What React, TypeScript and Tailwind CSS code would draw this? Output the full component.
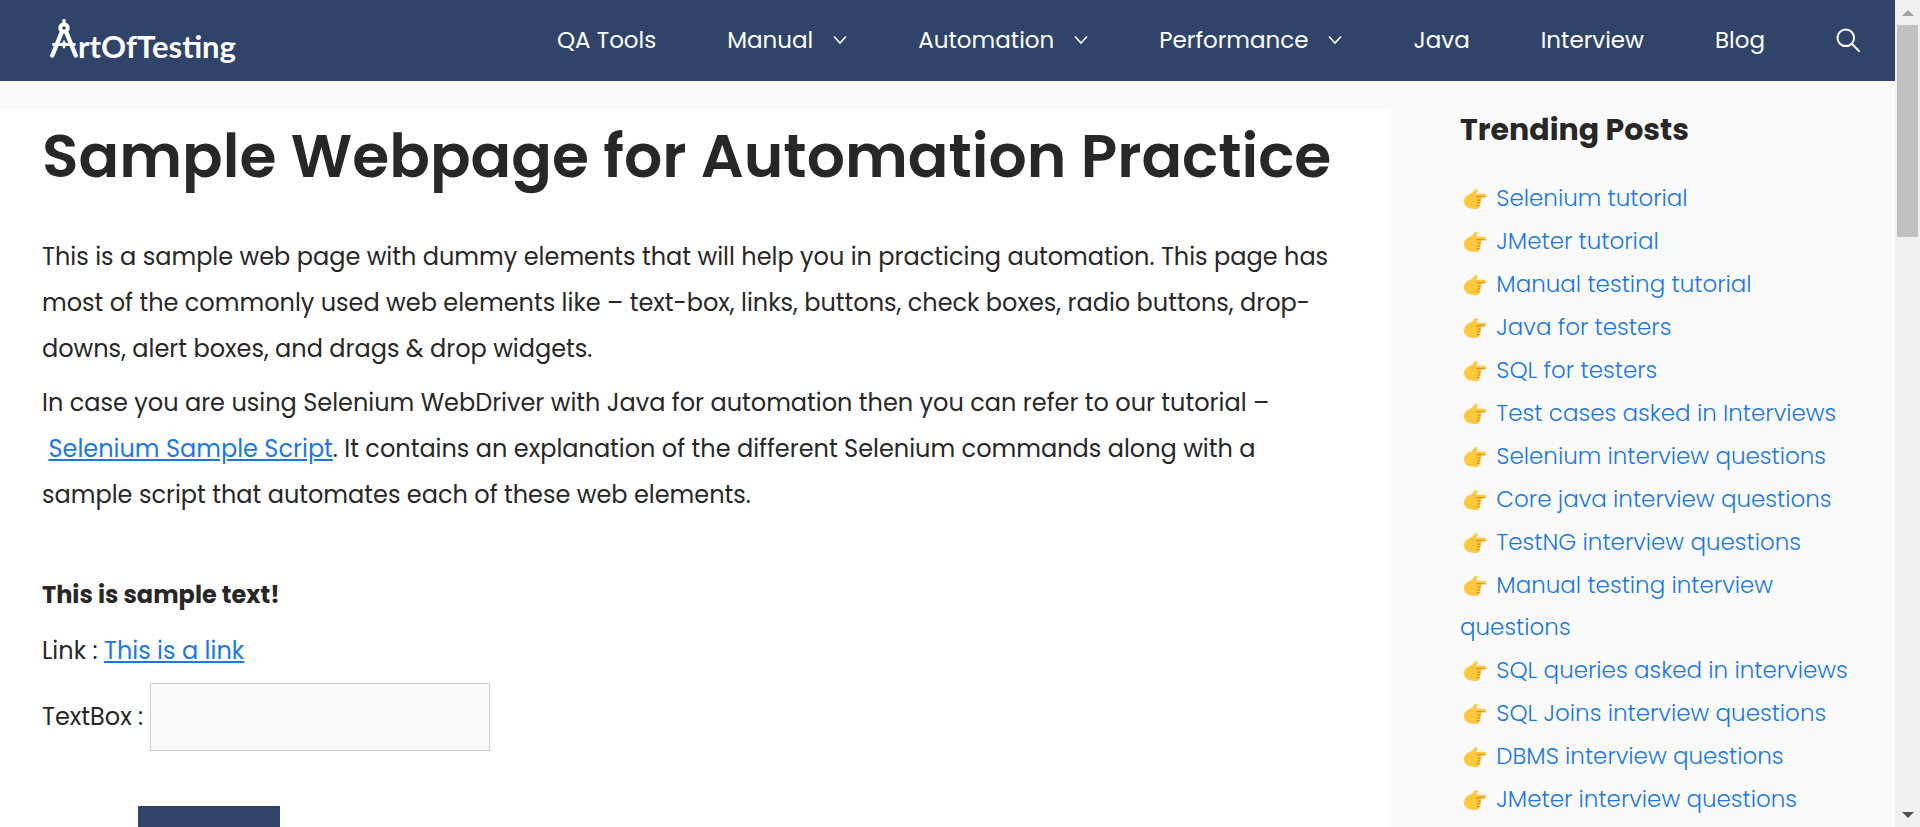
import React from "react";

type NavItem = { label: string; menu?: boolean };

const navItems: NavItem[] = [
  { label: "QA Tools" },
  { label: "Manual", menu: true },
  { label: "Automation", menu: true },
  { label: "Performance", menu: true },
  { label: "Java" },
  { label: "Interview" },
  { label: "Blog" },
];

const posts = [
  "Selenium tutorial",
  "JMeter tutorial",
  "Manual testing tutorial",
  "Java for testers",
  "SQL for testers",
  "Test cases asked in Interviews",
  "Selenium interview questions",
  "Core java interview questions",
  "TestNG interview questions",
  "Manual testing interview questions",
  "SQL queries asked in interviews",
  "SQL Joins interview questions",
  "DBMS interview questions",
  "JMeter interview questions",
];

function Logo() {
  return (
    <a href="#home" aria-label="ArtOfTesting" className="mt-1 flex items-baseline text-white">
      <svg viewBox="0 0 28 39" className="h-[39px] w-7" fill="none" stroke="currentColor" aria-hidden="true">
        <path d="M14 1.500v4" strokeWidth="3.200" strokeLinecap="round" />
        <circle cx="14" cy="9" r="3.700" strokeWidth="4" />
        <path d="M12 12.500 2.300 36.500M16 12.500l9.700 24" strokeWidth="4.400" strokeLinecap="round" />
        <path d="M3.500 25.500h21M14 23v5" strokeWidth="2.800" strokeLinecap="round" />
      </svg>
      <span className="font-[Lato,sans-serif] text-[31px] leading-[38px] font-bold">rtOfTesting</span>
    </a>
  );
}

function Chevron() {
  return (
    <svg viewBox="0 0 14 10" className="h-[10px] w-[14px]" fill="none" stroke="currentColor" strokeWidth="1.600" aria-hidden="true">
      <path d="M1 1.500 7 8l6-6.500" />
    </svg>
  );
}

function PointingHand() {
  return (
    <svg viewBox="0 0 24 22" className="mx-[3px] inline-block h-[22px] w-6 align-[-4px]" aria-hidden="true">
      <path
        d="M1 13.4C1 9.2 4.6 6.800 8 5.300c1.900-.9 2.700-3 4.200-4.100 1.300-.9 2.900.2 2.300 1.700l-1.300 2.900h8.500c1.700 0 1.700 2.900 0 3h-4c1.200.4 1.100 2.400-.2 2.900.9.700.6 2.400-.4 2.800.6.800.3 2.100-.6 2.500.5 1.400-.3 3.500-2 3.700-1.700.3-4.600.3-6.700-.2C3.900 19.700 1 17.300 1 13.400z"
        fill="#ffc83d"
      />
      <path d="M13.800 8.800h8.300M15 12h2.300M14.700 14.900h2.100M14.300 17.600h1.700" stroke="#d67d00" strokeWidth="1" strokeLinecap="round" />
    </svg>
  );
}

function Header() {
  return (
    <header className="flex h-[81px] items-center justify-between bg-[#304469] pr-[35px] pb-[2px] pl-[50px] text-white">
      <Logo />
      <nav className="flex items-center gap-[71px] text-[23px] leading-8">
        {navItems.map((item) => (
          <a key={item.label} href="#menu" className="flex items-center gap-5">
            {item.label}
            {item.menu && <Chevron />}
          </a>
        ))}
        <button type="button" aria-label="Search">
          <svg viewBox="0 0 24 24" className="size-6" fill="none" stroke="currentColor" strokeWidth="2" strokeLinecap="round" aria-hidden="true">
            <circle cx="9.800" cy="9.800" r="8.300" />
            <path d="m16 16 7 7" />
          </svg>
        </button>
      </nav>
    </header>
  );
}

function ScrollBar() {
  return (
    <div className="flex w-[25px] shrink-0 flex-col items-center justify-between bg-[#f0f0f0]" aria-hidden="true">
      <div className="flex w-full flex-col items-center">
        <div className="flex h-[25px] items-center">
          <svg viewBox="0 0 12 6" className="h-[6px] w-3">
            <path d="M6 0 12 6H0z" fill="#a3a3a3" />
          </svg>
        </div>
        <div className="h-[212px] w-[21px] bg-[#c1c1c1]" />
      </div>
      <div className="flex h-[25px] items-center">
        <svg viewBox="0 0 12 6" className="h-[6px] w-3">
          <path d="M0 0H12L6 6z" fill="#505050" />
        </svg>
      </div>
    </div>
  );
}

export default function App() {
  return (
    <div className="flex h-screen overflow-hidden bg-[#fafafa] font-[Poppins,Inter,sans-serif] text-[#272727]">
      <div className="flex min-w-0 flex-1 flex-col overflow-hidden">
        <Header />
        <div className="mt-[30px] flex min-h-0 flex-1">
          <main className="min-w-0 flex-1 bg-white pr-[56px] pl-[42px] text-[24px] leading-[46px]">
            <h1 className="pt-[6px] text-[60px] leading-[78px] font-semibold">Sample Webpage for Automation Practice</h1>
            <p className="pt-[39px]">
              This is a sample web page with dummy elements that will help you in practicing automation. This page has
              most of the commonly used web elements like – text-box, links, buttons, check boxes, radio buttons,
              drop-downs, alert boxes, and drags &amp; drop widgets.
            </p>
            <p className="pt-2">
              In case you are using Selenium WebDriver with Java for automation then you can refer to our tutorial –
              <br />
              &nbsp;
              <a href="#script" className="text-[#1b78e2] underline">
                Selenium Sample Script
              </a>
              . It contains an explanation of the different Selenium commands along with a sample script that automates
              each of these web elements.
            </p>
            <p className="pt-[54px] font-bold">This is sample text!</p>
            <p className="pt-[10px]">
              Link :{" "}
              <a href="#link" className="text-[#1b78e2] underline">
                This is a link
              </a>
            </p>
            <div className="flex items-center gap-[7px] pt-[9px]">
              <label htmlFor="fname">TextBox :</label>
              <input id="fname" type="text" className="h-[68px] w-[340px] border border-[#cccccc] bg-[#fafafa] px-4" />
            </div>
            <div className="pt-[55px] pl-24">
              <button type="button" aria-label="Submit" className="h-[68px] w-[142px] bg-[#304469]" />
            </div>
          </main>
          <aside className="w-[504px] shrink-0 pr-[42px] pl-[69px]">
            <h2 className="text-[30px] leading-[38px] font-bold">Trending Posts</h2>
            <ul className="flex flex-col gap-px pt-[28px] text-[23px] leading-[42px] font-light text-[#1b78e2]">
              {posts.map((post) => (
                <li key={post}>
                  <PointingHand />{" "}
                  <a href="#post">{post}</a>
                </li>
              ))}
            </ul>
          </aside>
        </div>
      </div>
      <ScrollBar />
    </div>
  );
}
